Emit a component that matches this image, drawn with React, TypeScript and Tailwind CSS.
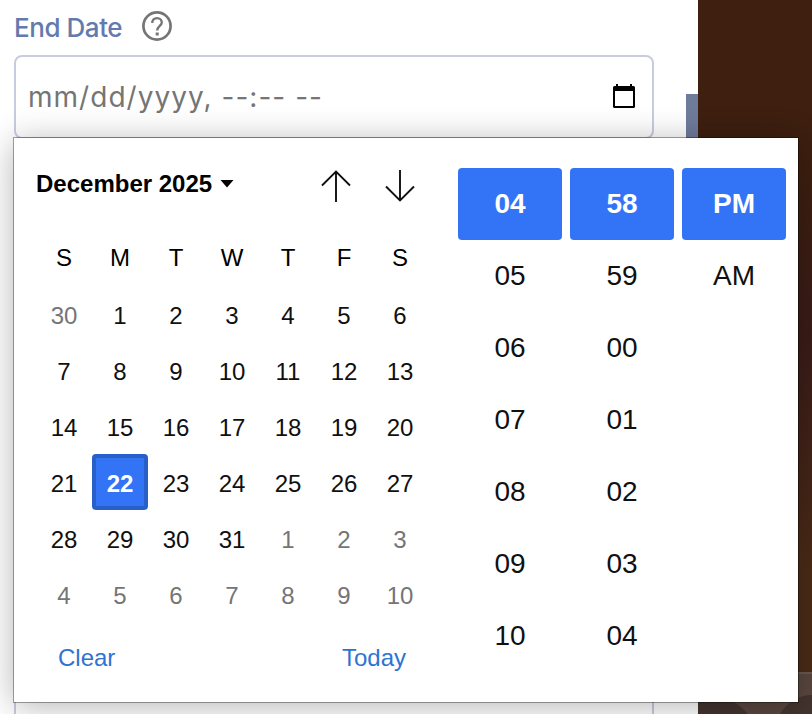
const weekdays = ['S', 'M', 'T', 'W', 'T', 'F', 'S']

// Grid starts on Nov 30 and runs six full weeks.
const days = Array.from({ length: 42 }, (_, i) => {
  if (i === 0) return { label: 30, outside: true }
  if (i > 31) return { label: i - 31, outside: true }
  return { label: i, outside: false }
})

const timeColumns = [
  ['04', '05', '06', '07', '08', '09', '10'],
  ['58', '59', '00', '01', '02', '03', '04'],
  ['PM', 'AM'],
]

export default function App() {
  return (
    <div className="relative flex h-[714px] w-[812px] overflow-hidden bg-white">
      <main className="w-[686px] shrink-0 pl-3.5 pt-2">
        <div className="flex h-9 items-center">
          <label className="w-32 whitespace-nowrap pt-0.5 font-['Inter',sans-serif] text-[26px] font-medium tracking-[-0.45px] text-[#637aad]">
            End Date
          </label>
          <HelpIcon />
        </div>
        <DateField />
        <div className="mt-[540px] h-20 w-[640px] border-2 border-[#c9cce0]" />
      </main>
      <div className="w-3 shrink-0 pt-[94px]">
        <div className="h-[580px] bg-[#6e7b9b]" />
      </div>
      <Backdrop />
      <Picker />
    </div>
  )
}

function DateField() {
  return (
    <div className="mt-[11px] flex h-[84px] w-[640px] items-center justify-between rounded-lg border-2 border-[#c9cce0] pl-3 pr-4">
      <span className="whitespace-pre font-['Inter',sans-serif] text-[28px] tracking-[1.03px] text-[#757575]">
        mm/dd/yyyy, --:-- --
      </span>
      <svg width="24" height="26" viewBox="0 0 24 26" className="mb-0.5">
        <path d="M4 1h2v2h12V1h2v2h1.500q1.500 0 1.500 1.500v19q0 1.500-1.500 1.500h-19Q1 25 1 23.500v-19Q1 3 2.500 3H4zM3 8v15h18V8z" fillRule="evenodd" />
      </svg>
    </div>
  )
}

function Picker() {
  return (
    <div className="absolute left-3.5 top-[138px] flex h-[564px] w-[784px] bg-white font-['Liberation_Sans',sans-serif] text-[#101010] shadow-[0_0_0_1px_rgba(0,0,0,0.35),0_4px_32px_rgba(0,0,0,0.3)]">
      <section className="w-[444px] pl-[22px] pt-5">
        <header className="flex h-[52px] items-center">
          <h2 className="w-[184px] whitespace-nowrap text-2xl font-bold text-black">December 2025</h2>
          <svg width="14" height="8" viewBox="0 0 14 8">
            <path d="M.500 0h13L7 7.500z" />
          </svg>
          <div className="ml-[86px] flex gap-8">
            <StepArrow />
            <StepArrow down />
          </div>
        </header>
        <div className="mt-5 grid w-[392px] grid-cols-7 text-center text-2xl text-black">
          {weekdays.map((d, i) => (
            <span key={i} className="h-14 leading-[56px]">
              {d}
            </span>
          ))}
        </div>
        <div className="grid w-[392px] grid-cols-7 text-center text-2xl">
          {days.map((day, i) => (
            <Day key={i} label={day.label} outside={day.outside} selected={i === 22} />
          ))}
        </div>
        <footer className="flex w-[370px] justify-between pl-[22px] pt-5 text-2xl leading-8 text-[#2f73d2]">
          <button type="button">Clear</button>
          <button type="button">Today</button>
        </footer>
      </section>
      <section className="flex gap-2 pt-[30px]">
        {timeColumns.map((values, c) => (
          <ul key={c} className="w-[104px] text-center text-[28px] leading-[72px]">
            {values.map((v, i) => (
              <li key={v} className={i === 0 ? 'rounded bg-[#3374f6] font-bold text-white' : ''}>
                {v}
              </li>
            ))}
          </ul>
        ))}
      </section>
    </div>
  )
}

function Day({ label, outside, selected }: { label: number; outside: boolean; selected: boolean }) {
  if (selected) {
    return (
      <span className="h-14 rounded border-4 border-[#285fc9] bg-[#3374f6] font-bold leading-[52px] text-white">
        {label}
      </span>
    )
  }
  return <span className={`h-14 leading-[60px] ${outside ? 'text-[#757575]' : ''}`}>{label}</span>
}

function StepArrow({ down = false }: { down?: boolean }) {
  return (
    <svg
      width="32"
      height="32"
      viewBox="0 0 32 32"
      fill="none"
      stroke="#101010"
      strokeWidth="1.900"
      className={down ? 'mt-1 rotate-180' : 'mt-1'}
    >
      <path d="M16 32V1M2 15.500 16 1.500 30 15.500" />
    </svg>
  )
}

function HelpIcon() {
  return (
    <svg width="30" height="30" viewBox="0 0 30 30" fill="none" stroke="#757575">
      <circle cx="15" cy="15" r="13.600" strokeWidth="2.700" />
      <path d="M10.200 12c0-3 2.100-4.900 4.800-4.900s4.800 1.900 4.800 4.500c0 3.200-4.600 3.700-4.600 7.900" strokeWidth="2.300" />
      <path d="M15.200 21.500v3" strokeWidth="3" />
    </svg>
  )
}

// Dark artwork showing at the right edge, behind the popup.
function Backdrop() {
  return (
    <div className="flex w-[114px] shrink-0 flex-col bg-linear-to-b from-[#3e1f10] from-25% via-[#3a1c18] via-47% to-[#4c2b17] to-80%">
      <div className="h-[672px]" />
      <svg width="114" height="42" viewBox="0 0 114 42">
        <path fill="#5a473f" d="M0 0h114v42H0z" />
        <path fill="#6b5850" d="M0 0h114v2H0z" />
        <path fill="#44342f" d="M0 18q30 2 50 24H0zM82 42q12-19 32-19v19z" />
      </svg>
    </div>
  )
}
